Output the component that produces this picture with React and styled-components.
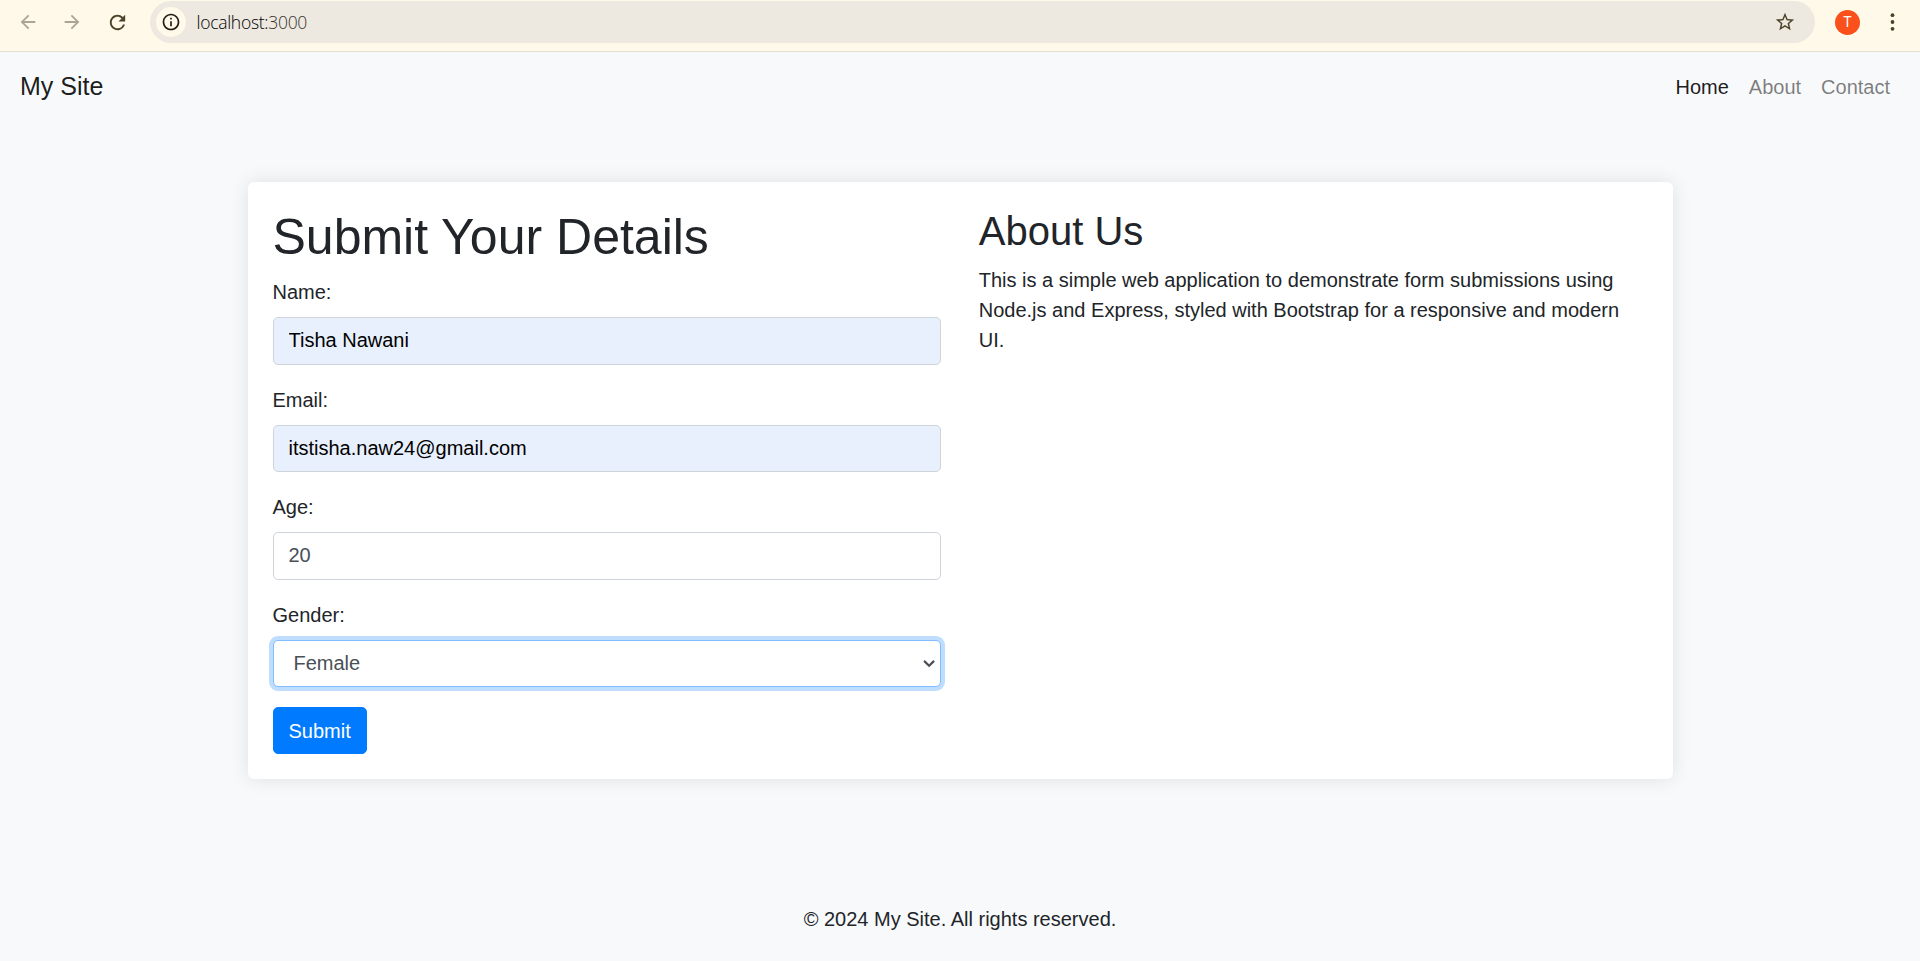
import React from 'react';
import styled, { createGlobalStyle } from 'styled-components';
import {
  MdArrowBack,
  MdArrowForward,
  MdRefresh,
  MdInfoOutline,
  MdStarBorder,
} from 'react-icons/md';

const GlobalStyle = createGlobalStyle`
  *, *::before, *::after { box-sizing: border-box; }
  html { font-size: 20px; }
  body {
    margin: 0;
    background: #f8f9fb;
    color: #212529;
    font-family: "Liberation Sans", Arial, sans-serif;
    font-size: 1rem;
    line-height: 1.5;
    overflow: hidden;
  }
`;

const Page = styled.div`
  display: flex;
  flex-direction: column;
  height: 961px;
`;

const BrowserBar = styled.header`
  display: flex;
  align-items: flex-start;
  height: 52px;
  padding-top: 1px;
  background: #fff9ea;
  border-bottom: 1px solid #e5dfd0;
`;

const BarButtons = styled.div`
  display: flex;
  align-items: center;
  width: 150px;
  height: 42px;
  padding-left: 16.5px;
  gap: 22.75px;
`;

const BarIcon = styled.span`
  display: flex;
  color: ${(p) => (p.$muted ? '#aaa697' : '#4a4428')};
`;

const AddressBar = styled.div`
  display: flex;
  align-items: center;
  width: 1665px;
  height: 42px;
  padding: 0 19px 0 6px;
  border-radius: 21px;
  background: #ede8e0;
`;

const SiteInfo = styled.span`
  display: flex;
  align-items: center;
  justify-content: center;
  width: 30px;
  height: 30px;
  border-radius: 50%;
  background: #fff9ea;
  color: #1f1c12;
`;

const Url = styled.span`
  flex: 1;
  padding-left: 10.5px;
  font-family: "Open Sans", "Noto Sans", sans-serif;
  font-weight: 300;
  font-size: 17.5px;
  line-height: 24px;
  letter-spacing: -0.28px;
  color: #000;
`;

const Port = styled.span`
  color: #38352e;
`;

const ProfileArea = styled.div`
  display: flex;
  align-items: center;
  height: 42px;
  padding-left: 20px;
  gap: 30px;
`;

const Avatar = styled.span`
  display: flex;
  align-items: center;
  justify-content: center;
  width: 25px;
  height: 25px;
  border-radius: 50%;
  background: #f9501c;
  color: #fff;
  font-family: Roboto, sans-serif;
  font-size: 14px;
  line-height: 1;
`;

const Navbar = styled.nav`
  display: flex;
  align-items: center;
  justify-content: space-between;
  height: 70px;
  padding: 10px 20px;
`;

const Brand = styled.a`
  font-size: 1.25rem;
  color: rgba(0, 0, 0, 0.9);
`;

const NavLinks = styled.div`
  display: flex;
`;

const NavLink = styled.a`
  padding: 10px;
  color: rgba(0, 0, 0, ${(p) => (p.$active ? 0.9 : 0.5)});
`;

const Card = styled.main`
  display: grid;
  grid-template-columns: 1fr 1fr;
  column-gap: 37.5px;
  width: 1425px;
  height: 597px;
  margin: 60px auto 0;
  padding: 25px;
  border-radius: 6px;
  background: #fff;
  box-shadow: 0 0 19px rgba(0, 0, 0, 0.1);
`;

const Title = styled.h1`
  margin: 0 0 10px;
  font-size: 50px;
  font-weight: 500;
  line-height: 1.2;
`;

const Subtitle = styled.h2`
  margin: 0 0 10px;
  font-size: 40px;
  font-weight: 500;
  line-height: 1.2;
`;

const Paragraph = styled.p`
  margin: 0;
`;

const Group = styled.div`
  margin-bottom: 20px;
`;

const Label = styled.label`
  display: block;
  margin-bottom: 10px;
`;

const Input = styled.input`
  display: block;
  width: 100%;
  height: 47.5px;
  padding: 7.5px 15px;
  border: 1px solid #ced4da;
  border-radius: 5px;
  background: ${(p) => (p.$filled ? '#e8f0fe' : '#fff')};
  color: ${(p) => (p.$filled ? '#000' : '#495057')};
  font: inherit;
`;

const SelectBox = styled.div`
  display: flex;
  align-items: center;
  justify-content: space-between;
  height: 47.5px;
  padding: 0 4.75px 0 20px;
  border: 1px solid #80bdff;
  border-radius: 5px;
  background: #fff;
  color: #495057;
  box-shadow: 0 0 0 4px #bfdeff;
`;

const SubmitButton = styled.button`
  display: block;
  height: 47px;
  padding: 0 15px;
  border: 1px solid #007bff;
  border-radius: 5px;
  background: #007bff;
  color: #fff;
  font: inherit;
`;

const Footer = styled.footer`
  margin-top: 125px;
  text-align: center;
`;

function Field({ label, value, filled }) {
  return (
    <Group>
      <Label>{label}</Label>
      <Input value={value} readOnly $filled={filled} />
    </Group>
  );
}

export default function App() {
  return (
    <Page>
      <GlobalStyle />
      <BrowserBar>
        <BarButtons>
          <BarIcon $muted><MdArrowBack size={22} /></BarIcon>
          <BarIcon $muted><MdArrowForward size={22} /></BarIcon>
          <BarIcon><MdRefresh size={23} /></BarIcon>
        </BarButtons>
        <AddressBar>
          <SiteInfo><MdInfoOutline size={20} /></SiteInfo>
          <Url>localhost:<Port>3000</Port></Url>
          <BarIcon><MdStarBorder size={22} /></BarIcon>
        </AddressBar>
        <ProfileArea>
          <Avatar>T</Avatar>
          <BarIcon>
            <svg width="5" height="18" viewBox="0 0 5 18" fill="currentColor">
              <circle cx="2.5" cy="2.2" r="1.9" />
              <circle cx="2.5" cy="9" r="1.9" />
              <circle cx="2.5" cy="15.8" r="1.9" />
            </svg>
          </BarIcon>
        </ProfileArea>
      </BrowserBar>
      <Navbar>
        <Brand>My Site</Brand>
        <NavLinks>
          <NavLink $active>Home</NavLink>
          <NavLink>About</NavLink>
          <NavLink>Contact</NavLink>
        </NavLinks>
      </Navbar>
      <Card>
        <section>
          <Title>Submit Your Details</Title>
          <Field label="Name:" value="Tisha Nawani" filled />
          <Field label="Email:" value="itstisha.naw24@gmail.com" filled />
          <Field label="Age:" value="20" />
          <Group>
            <Label>Gender:</Label>
            <SelectBox>
              Female
              <svg width="14" height="10" viewBox="0 0 14 10" fill="none">
                <path d="M2.1 2.9 7.1 7.7l5-4.8" stroke="#495057" strokeWidth="2.2" />
              </svg>
            </SelectBox>
          </Group>
          <SubmitButton>Submit</SubmitButton>
        </section>
        <section>
          <Subtitle>About Us</Subtitle>
          <Paragraph>
            This is a simple web application to demonstrate form submissions using
            Node.js and Express, styled with Bootstrap for a responsive and modern UI.
          </Paragraph>
        </section>
      </Card>
      <Footer>© 2024 My Site. All rights reserved.</Footer>
    </Page>
  );
}
